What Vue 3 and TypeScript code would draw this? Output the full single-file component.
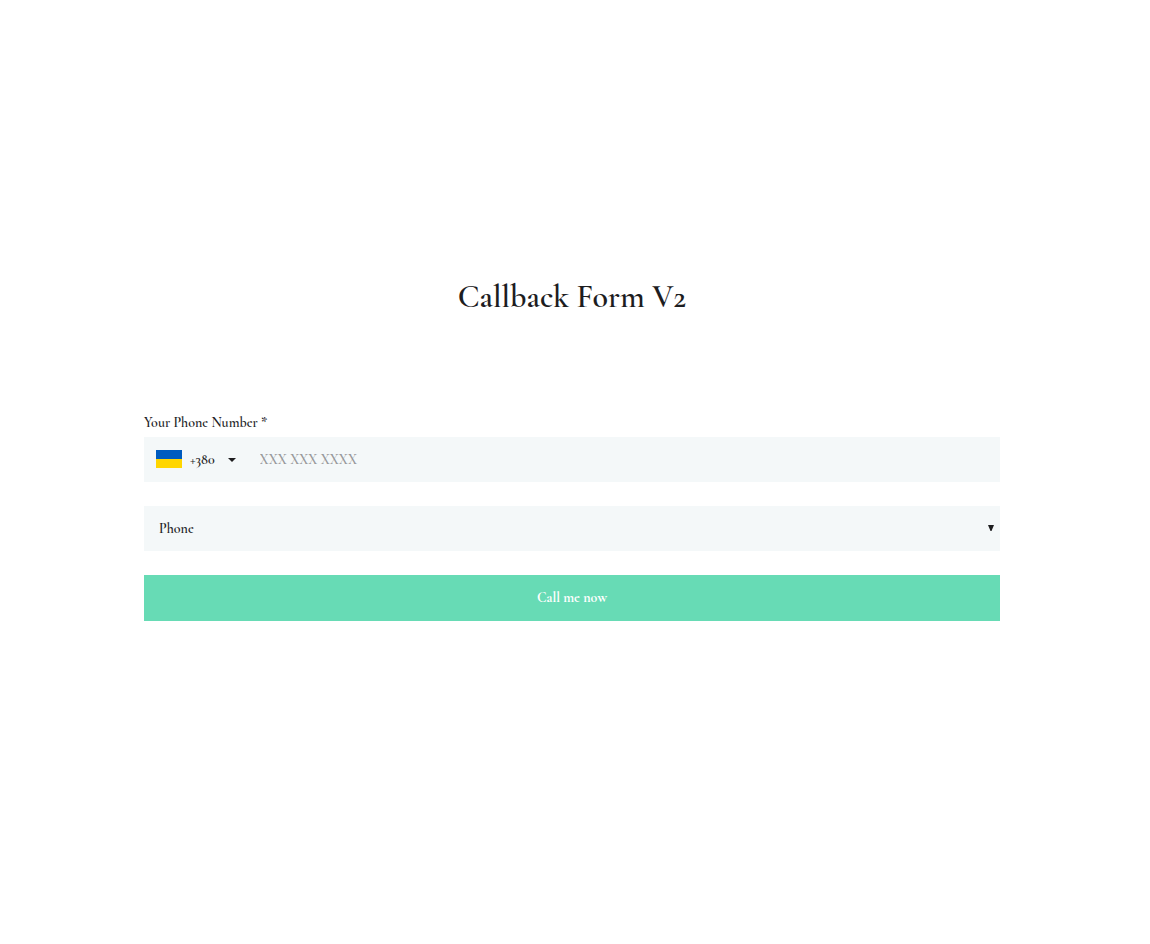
<script setup lang="ts">
import { ref } from 'vue'

const phone = ref('')
const method = ref('Phone')
const methods: string[] = ['Phone']
</script>

<template>
  <main class="page">
    <h1 class="title">Callback Form V2</h1>
    <form class="form" @submit.prevent>
      <div class="field">
        <label class="label" for="phone">Your Phone Number *</label>
        <div class="control">
          <button class="country" type="button" aria-label="Country code +380">
            <svg class="flag" viewBox="0 0 26 18" aria-hidden="true">
              <rect width="26" height="18" fill="#ffd600" />
              <rect width="26" height="9" fill="#005bbf" />
            </svg>
            <span class="code">+380</span>
            <svg class="caret" viewBox="0 0 8 6" aria-hidden="true">
              <path d="M0 2h8L4 6z" fill="#1d1d1f" />
            </svg>
          </button>
          <input id="phone" v-model="phone" class="phone" type="tel" placeholder="XXX XXX XXXX" required />
        </div>
      </div>
      <div class="control">
        <select v-model="method" class="method" aria-label="Contact method">
          <option v-for="item in methods" :key="item" :value="item">{{ item }}</option>
        </select>
        <svg class="arrow" viewBox="0 0 6 6" aria-hidden="true">
          <path d="M0 0h6L3.5 6h-1z" fill="#1d1d1f" />
        </svg>
      </div>
      <button class="submit" type="submit">Call me now</button>
    </form>
  </main>
</template>

<style>
body {
  margin: 0;
  background: #fff;
}
</style>

<style scoped>
.page {
  box-sizing: border-box;
  padding: 277px 150px 48px 144px;
  color: #1d1d1f;
  font-family: "Cormorant Garamond", "Liberation Serif", serif;
  font-size: 14px;
  font-weight: 600;
}

.title {
  margin: 0 0 96px;
  font-size: 32px;
  font-weight: 600;
  line-height: 40px;
  text-align: center;
}

.form {
  display: flex;
  flex-direction: column;
  gap: 24px;
}

.field {
  display: flex;
  flex-direction: column;
  gap: 4px;
}

.label {
  line-height: 20px;
}

.control {
  position: relative;
  display: flex;
  height: 45px;
  background: #f4f8f9;
}

.country {
  display: flex;
  align-items: center;
  padding: 0 12px 1px;
  border: 0;
  background: none;
  color: inherit;
  font: inherit;
  cursor: pointer;
}

.flag {
  width: 26px;
  height: 18px;
  margin-right: 8px;
}

.code {
  margin-right: 13px;
}

.caret {
  width: 8px;
  height: 6px;
}

.phone {
  flex: 1;
  min-width: 0;
  padding: 0 12px;
  border: 0;
  background: none;
  color: inherit;
  font: inherit;
}

.phone::placeholder {
  color: #98999b;
  opacity: 1;
}

.method {
  width: 100%;
  padding: 0 24px 0 15px;
  border: 0;
  border-radius: 0;
  appearance: none;
  background: none;
  color: inherit;
  font: inherit;
}

.arrow {
  position: absolute;
  top: 19px;
  right: 6px;
  width: 6px;
  height: 6px;
  pointer-events: none;
}

.submit {
  height: 46px;
  padding: 0 16px 2px;
  border: 0;
  background: #67dbb5;
  color: #fff;
  font: inherit;
  font-weight: 700;
  cursor: pointer;
}
</style>
